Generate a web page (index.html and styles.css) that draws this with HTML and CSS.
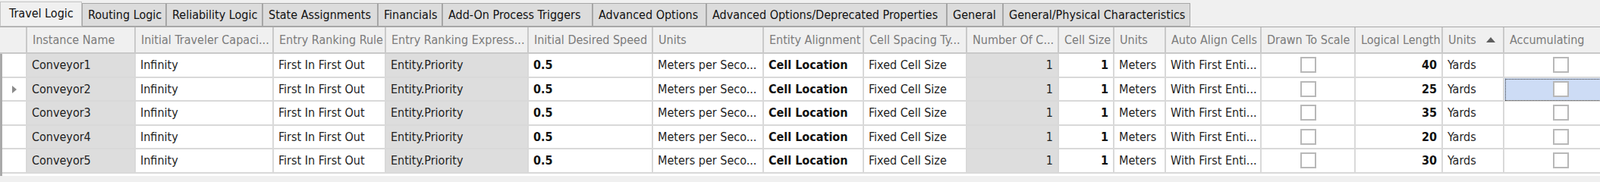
FILE: index.html
```html
<!DOCTYPE html>
<html>
<head>
<meta charset="utf-8">
<link rel="stylesheet" href="styles.css">
</head>
<body>
<div class="tabs">
  <div class="tab active">Travel Logic</div>
  <div class="tab">Routing Logic</div>
  <div class="tab">Reliability Logic</div>
  <div class="tab">State Assignments</div>
  <div class="tab">Financials</div>
  <div class="tab">Add-On Process Triggers</div>
  <div class="tab">Advanced Options</div>
  <div class="tab">Advanced Options/Deprecated Properties</div>
  <div class="tab">General</div>
  <div class="tab">General/Physical Characteristics</div>
</div>
<div class="grid">
  <div class="row head">
    <div class="cell"></div>
    <div class="cell">Instance Name</div>
    <div class="cell">Initial Traveler Capaci...</div>
    <div class="cell">Entry Ranking Rule</div>
    <div class="cell">Entry Ranking Express...</div>
    <div class="cell">Initial Desired Speed</div>
    <div class="cell">Units</div>
    <div class="cell">Entity Alignment</div>
    <div class="cell">Cell Spacing Ty...</div>
    <div class="cell">Number Of C...</div>
    <div class="cell">Cell Size</div>
    <div class="cell">Units</div>
    <div class="cell">Auto Align Cells</div>
    <div class="cell">Drawn To Scale</div>
    <div class="cell">Logical Length</div>
    <div class="cell sorted">Units<span class="arrow"></span></div>
    <div class="cell">Accumulating</div>
  </div>
  <div class="body">
    <div class="row">
      <div class="cell sel"></div>
      <div class="cell ro">Conveyor1</div>
      <div class="cell">Infinity</div>
      <div class="cell">First In First Out</div>
      <div class="cell ro">Entity.Priority</div>
      <div class="cell b">0.5</div>
      <div class="cell">Meters per Seco...</div>
      <div class="cell b">Cell Location</div>
      <div class="cell">Fixed Cell Size</div>
      <div class="cell ro num">1</div>
      <div class="cell b num">1</div>
      <div class="cell">Meters</div>
      <div class="cell">With First Enti...</div>
      <div class="cell chk"><span class="box"></span></div>
      <div class="cell b num">40</div>
      <div class="cell">Yards</div>
      <div class="cell chk"><span class="box"></span></div>
    </div>
    <div class="row">
      <div class="cell sel"><span class="tri"></span></div>
      <div class="cell ro">Conveyor2</div>
      <div class="cell">Infinity</div>
      <div class="cell">First In First Out</div>
      <div class="cell ro">Entity.Priority</div>
      <div class="cell b">0.5</div>
      <div class="cell">Meters per Seco...</div>
      <div class="cell b">Cell Location</div>
      <div class="cell">Fixed Cell Size</div>
      <div class="cell ro num">1</div>
      <div class="cell b num">1</div>
      <div class="cell">Meters</div>
      <div class="cell">With First Enti...</div>
      <div class="cell chk"><span class="box"></span></div>
      <div class="cell b num">25</div>
      <div class="cell">Yards</div>
      <div class="cell chk focus"><span class="box"></span></div>
    </div>
    <div class="row">
      <div class="cell sel"></div>
      <div class="cell ro">Conveyor3</div>
      <div class="cell">Infinity</div>
      <div class="cell">First In First Out</div>
      <div class="cell ro">Entity.Priority</div>
      <div class="cell b">0.5</div>
      <div class="cell">Meters per Seco...</div>
      <div class="cell b">Cell Location</div>
      <div class="cell">Fixed Cell Size</div>
      <div class="cell ro num">1</div>
      <div class="cell b num">1</div>
      <div class="cell">Meters</div>
      <div class="cell">With First Enti...</div>
      <div class="cell chk"><span class="box"></span></div>
      <div class="cell b num">35</div>
      <div class="cell">Yards</div>
      <div class="cell chk"><span class="box"></span></div>
    </div>
    <div class="row">
      <div class="cell sel"></div>
      <div class="cell ro">Conveyor4</div>
      <div class="cell">Infinity</div>
      <div class="cell">First In First Out</div>
      <div class="cell ro">Entity.Priority</div>
      <div class="cell b">0.5</div>
      <div class="cell">Meters per Seco...</div>
      <div class="cell b">Cell Location</div>
      <div class="cell">Fixed Cell Size</div>
      <div class="cell ro num">1</div>
      <div class="cell b num">1</div>
      <div class="cell">Meters</div>
      <div class="cell">With First Enti...</div>
      <div class="cell chk"><span class="box"></span></div>
      <div class="cell b num">20</div>
      <div class="cell">Yards</div>
      <div class="cell chk"><span class="box"></span></div>
    </div>
    <div class="row">
      <div class="cell sel"></div>
      <div class="cell ro">Conveyor5</div>
      <div class="cell">Infinity</div>
      <div class="cell">First In First Out</div>
      <div class="cell ro">Entity.Priority</div>
      <div class="cell b">0.5</div>
      <div class="cell">Meters per Seco...</div>
      <div class="cell b">Cell Location</div>
      <div class="cell">Fixed Cell Size</div>
      <div class="cell ro num">1</div>
      <div class="cell b num">1</div>
      <div class="cell">Meters</div>
      <div class="cell">With First Enti...</div>
      <div class="cell chk"><span class="box"></span></div>
      <div class="cell b num">30</div>
      <div class="cell">Yards</div>
      <div class="cell chk"><span class="box"></span></div>
    </div>
  </div>
</div>
</body>
</html>
```
FILE: styles.css
```css
:root {
  --cols: 143px 182px 148px 188px 164px 146px 132px 136px 121px 73px 68px 126px 124px 115px 81px 150px;
}
html, body {
  margin: 0;
  padding: 0;
  width: 2109px;
  height: 232px;
  overflow: hidden;
  background: #f0f0f0;
  font-family: "DejaVu Sans Condensed", "DejaVu Sans", sans-serif;
  font-size: 16px;
  color: #1e1e1e;
}
.tabs {
  display: grid;
  grid-template-columns: 108px 111px 127px 152px 85px 198px 150px 317px 74px 247px;
  align-items: end;
  height: 35px;
  border-bottom: 1px solid #a8a8a8;
  box-sizing: content-box;
}
.tab {
  box-sizing: border-box;
  height: 31px;
  background: #dcdcdc;
  border: 1px solid #a6a6a6;
  display: flex;
  align-items: center;
  justify-content: flex-start;
  padding: 0 0 1px 7px;
  white-space: nowrap;
  overflow: hidden;
  color: #111;
}
.tab.active {
  height: 33px;
  background: #f0f0f0;
  border-color: #c4c4c4;
  padding: 0 0 3px 11px;
}
.grid {
  width: 2133px;
}
.row {
  display: grid;
  height: 31.5px;
}
.row.head {
  grid-template-columns: 36px var(--cols);
  height: 35px;
  background: #f0f0f0;
  color: #7b7b7b;
}
.body {
  height: 161px;
  background: #fff;
  border-left: 3px solid #a9a9a9;
  box-sizing: border-box;
}
.body .row {
  grid-template-columns: 33px var(--cols);
}
.cell {
  box-sizing: border-box;
  border-right: 2px solid #d9d9d9;
  border-bottom: 2px solid #d9d9d9;
  padding: 0 6px;
  display: flex;
  align-items: center;
  white-space: nowrap;
  overflow: hidden;
  background: #fff;
}
.head .cell {
  background: #f0f0f0;
  border-right-color: #c9c9c9;
  border-bottom-color: #c9c9c9;
  padding-left: 7px;
}
.cell.ro {
  background: #dddddd;
}
.cell.b {
  font-weight: bold;
  color: #111;
}
.cell.num {
  justify-content: flex-end;
}
.cell.chk {
  justify-content: center;
}
.cell.sel {
  justify-content: center;
  padding: 0;
}
.tri {
  width: 0;
  height: 0;
  border-left: 6px solid #8a8a8a;
  border-top: 5px solid transparent;
  border-bottom: 5px solid transparent;
  margin-top: 2px;
}
.box {
  width: 21px;
  height: 21px;
  box-sizing: border-box;
  border: 2px solid #b8b8b8;
  background: #fff;
}
.cell.focus {
  background: #cddcf5;
  outline: 1px dotted #333;
  outline-offset: -2px;
}
.sorted {
  justify-content: space-between;
}
.arrow {
  width: 0;
  height: 0;
  border-left: 6px solid transparent;
  border-right: 6px solid transparent;
  border-bottom: 7px solid #5f5f5f;
  margin-right: 4px;
}
```
